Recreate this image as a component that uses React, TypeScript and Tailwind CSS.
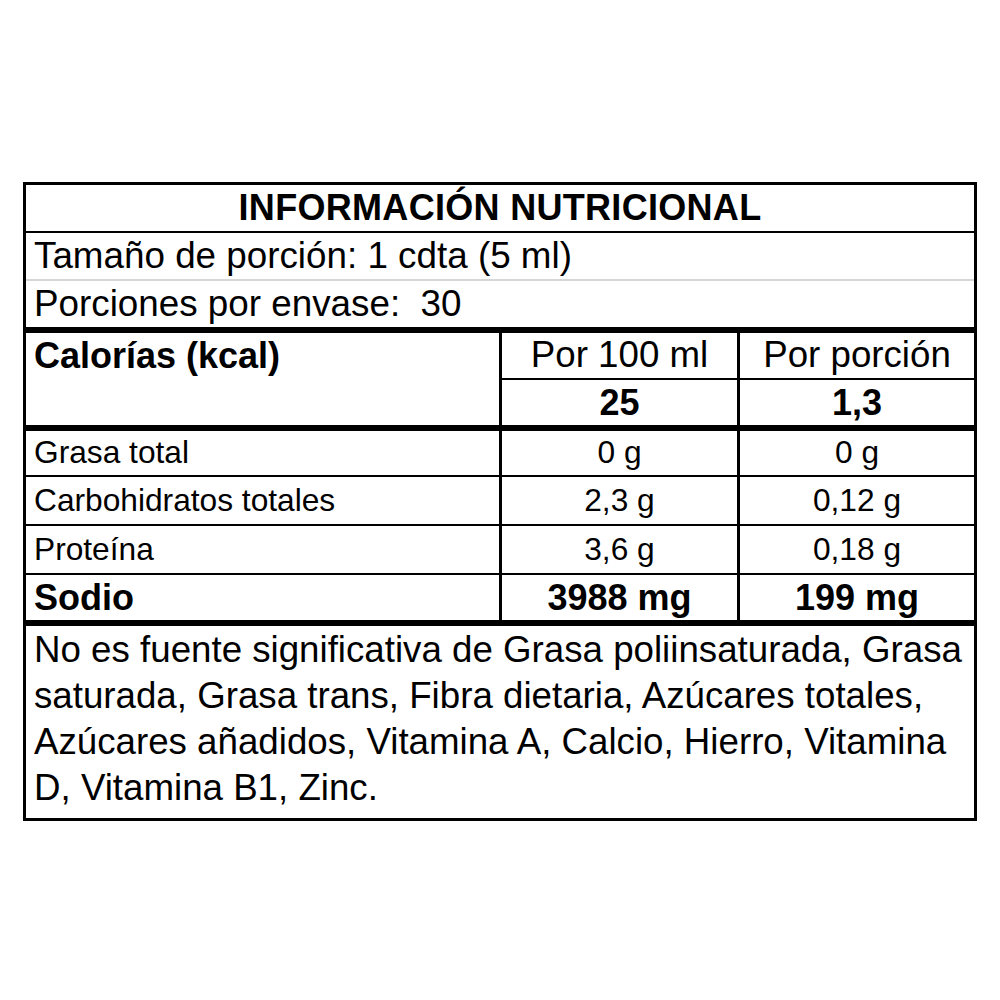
import React from 'react'

const font = "font-['Liberation_Sans',Arial,Helvetica,sans-serif]"

type Item = { name: string; per100: string; perPortion: string; bold?: boolean; h: string; border: string }

const items: Item[] = [
  { name: 'Grasa total', per100: '0 g', perPortion: '0 g', h: 'h-[46px]', border: 'border-b-2' },
  { name: 'Carbohidratos totales', per100: '2,3 g', perPortion: '0,12 g', h: 'h-[49px]', border: 'border-b-2' },
  { name: 'Proteína', per100: '3,6 g', perPortion: '0,18 g', h: 'h-[49px]', border: 'border-b-2' },
  { name: 'Sodio', per100: '3988 mg', perPortion: '199 mg', bold: true, h: 'h-[51px]', border: 'border-b-[6px]' },
]

// One row of the three column part of the label
const NutrientRow = ({ item }: { item: Item }) => {
  const text = item.bold ? 'text-[36px] font-bold' : 'text-[31.7px]'
  return (
    <div className={`grid grid-cols-[473px_238px_237px] border-black ${item.h} ${item.border}`}>
      <div className={`flex items-center pl-[8px] ${text}`}>{item.name}</div>
      <div className={`flex items-center justify-center border-l-[3px] border-black ${text}`}>{item.per100}</div>
      <div className={`flex items-center justify-center border-l-[3px] border-black ${text}`}>{item.perPortion}</div>
    </div>
  )
}

export default function App() {
  return (
    <div className={`min-h-[1000px] w-[1000px] bg-white pt-[182px] text-black ${font}`}>
      <div className="ml-[23px] w-[954px] border-[3px] border-black leading-none">
        {/* Title */}
        <div className="flex h-[48px] items-center justify-center border-b-2 border-black text-[36px] font-bold tracking-[0.3px]">
          INFORMACIÓN NUTRICIONAL
        </div>

        {/* Serving info */}
        <div className="flex h-[48px] items-center border-b-2 border-[#d6d6d6] pl-[8px] text-[36.8px]">
          Tamaño de porción: 1 cdta (5 ml)
        </div>
        <div className="flex h-[52px] items-center whitespace-pre border-b-[6px] border-black pl-[8px] text-[36.8px]">
          Porciones por envase:  30
        </div>

        {/* Calories */}
        <div className="grid grid-cols-[473px_238px_237px] border-b-[6px] border-black">
          <div className="row-span-2 pl-[8px]">
            <div className="flex h-[45px] items-center text-[36px] font-bold">Calorías (kcal)</div>
          </div>
          <div className="flex h-[47px] items-center justify-center border-b-2 border-l-[3px] border-black text-[36.7px]">
            Por 100 ml
          </div>
          <div className="flex h-[47px] items-center justify-center border-b-2 border-l-[3px] border-black text-[36.7px]">
            Por porción
          </div>
          <div className="flex h-[45px] items-center justify-center border-l-[3px] border-black text-[36px] font-bold">
            25
          </div>
          <div className="flex h-[45px] items-center justify-center border-l-[3px] border-black text-[36px] font-bold">
            1,3
          </div>
        </div>

        {/* Nutrients */}
        {items.map((item) => (
          <NutrientRow key={item.name} item={item} />
        ))}

        {/* Footnote */}
        <div className="h-[192px] whitespace-nowrap pl-[8px] pt-px text-[36.7px] leading-[46px]">
          No es fuente significativa de Grasa poliinsaturada, Grasa
          <br />
          saturada, Grasa trans, Fibra dietaria, Azúcares totales,
          <br />
          Azúcares añadidos, Vitamina A, Calcio, Hierro, Vitamina
          <br />
          D, Vitamina B1, Zinc.
        </div>
      </div>
    </div>
  )
}
